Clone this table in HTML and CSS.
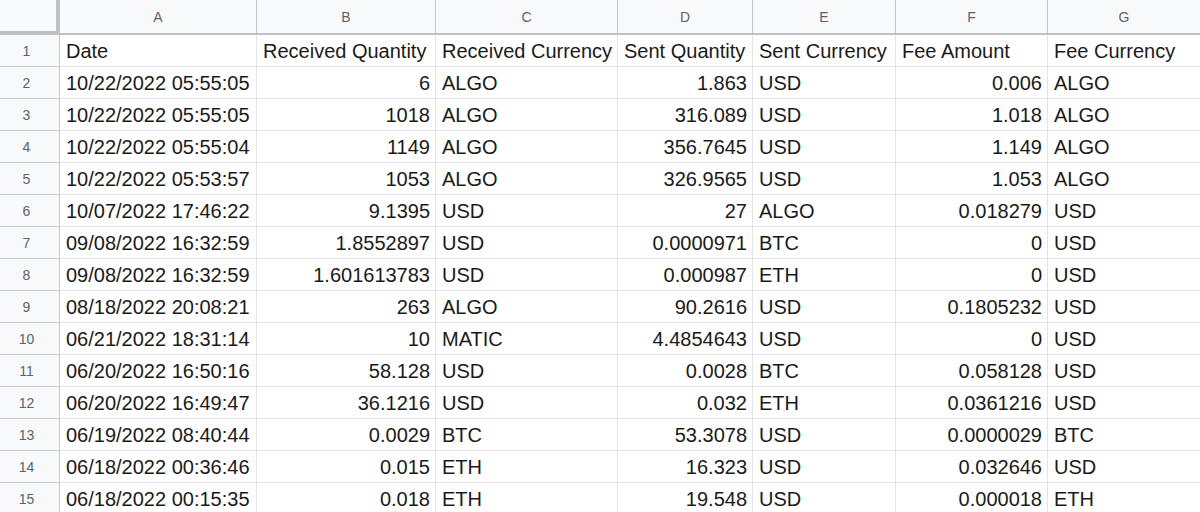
FILE: index.html
```html
<!DOCTYPE html>
<html>
<head>
<meta charset="utf-8">
<link rel="stylesheet" href="styles.css">
</head>
<body>
<div class="sheet">
  <div class="corner"></div>
  <div class="colh">A</div><div class="colh">B</div><div class="colh">C</div><div class="colh">D</div><div class="colh">E</div><div class="colh">F</div><div class="colh last">G</div>

  <div class="rowh">1</div>
  <div class="c">Date</div><div class="c">Received Quantity</div><div class="c">Received Currency</div><div class="c">Sent Quantity</div><div class="c">Sent Currency</div><div class="c">Fee Amount</div><div class="c last">Fee Currency</div>

  <div class="rowh">2</div>
  <div class="c">10/22/2022 05:55:05</div><div class="c n">6</div><div class="c">ALGO</div><div class="c n">1.863</div><div class="c">USD</div><div class="c n">0.006</div><div class="c last">ALGO</div>

  <div class="rowh">3</div>
  <div class="c">10/22/2022 05:55:05</div><div class="c n">1018</div><div class="c">ALGO</div><div class="c n">316.089</div><div class="c">USD</div><div class="c n">1.018</div><div class="c last">ALGO</div>

  <div class="rowh">4</div>
  <div class="c">10/22/2022 05:55:04</div><div class="c n">1149</div><div class="c">ALGO</div><div class="c n">356.7645</div><div class="c">USD</div><div class="c n">1.149</div><div class="c last">ALGO</div>

  <div class="rowh">5</div>
  <div class="c">10/22/2022 05:53:57</div><div class="c n">1053</div><div class="c">ALGO</div><div class="c n">326.9565</div><div class="c">USD</div><div class="c n">1.053</div><div class="c last">ALGO</div>

  <div class="rowh">6</div>
  <div class="c">10/07/2022 17:46:22</div><div class="c n">9.1395</div><div class="c">USD</div><div class="c n">27</div><div class="c">ALGO</div><div class="c n">0.018279</div><div class="c last">USD</div>

  <div class="rowh">7</div>
  <div class="c">09/08/2022 16:32:59</div><div class="c n">1.8552897</div><div class="c">USD</div><div class="c n">0.0000971</div><div class="c">BTC</div><div class="c n">0</div><div class="c last">USD</div>

  <div class="rowh">8</div>
  <div class="c">09/08/2022 16:32:59</div><div class="c n">1.601613783</div><div class="c">USD</div><div class="c n">0.000987</div><div class="c">ETH</div><div class="c n">0</div><div class="c last">USD</div>

  <div class="rowh">9</div>
  <div class="c">08/18/2022 20:08:21</div><div class="c n">263</div><div class="c">ALGO</div><div class="c n">90.2616</div><div class="c">USD</div><div class="c n">0.1805232</div><div class="c last">USD</div>

  <div class="rowh">10</div>
  <div class="c">06/21/2022 18:31:14</div><div class="c n">10</div><div class="c">MATIC</div><div class="c n">4.4854643</div><div class="c">USD</div><div class="c n">0</div><div class="c last">USD</div>

  <div class="rowh">11</div>
  <div class="c">06/20/2022 16:50:16</div><div class="c n">58.128</div><div class="c">USD</div><div class="c n">0.0028</div><div class="c">BTC</div><div class="c n">0.058128</div><div class="c last">USD</div>

  <div class="rowh">12</div>
  <div class="c">06/20/2022 16:49:47</div><div class="c n">36.1216</div><div class="c">USD</div><div class="c n">0.032</div><div class="c">ETH</div><div class="c n">0.0361216</div><div class="c last">USD</div>

  <div class="rowh">13</div>
  <div class="c">06/19/2022 08:40:44</div><div class="c n">0.0029</div><div class="c">BTC</div><div class="c n">53.3078</div><div class="c">USD</div><div class="c n">0.0000029</div><div class="c last">BTC</div>

  <div class="rowh">14</div>
  <div class="c">06/18/2022 00:36:46</div><div class="c n">0.015</div><div class="c">ETH</div><div class="c n">16.323</div><div class="c">USD</div><div class="c n">0.032646</div><div class="c last">USD</div>

  <div class="rowh">15</div>
  <div class="c">06/18/2022 00:15:35</div><div class="c n">0.018</div><div class="c">ETH</div><div class="c n">19.548</div><div class="c">USD</div><div class="c n">0.000018</div><div class="c last">ETH</div>
</div>
</body>
</html>
```

FILE: styles.css
```css
html, body {
  margin: 0;
  padding: 0;
  background: #ffffff;
  overflow: hidden;
}

.sheet {
  display: grid;
  grid-template-columns: 60px 197px 179px 182px 135px 143px 152px 1fr;
  grid-template-rows: 35px;
  grid-auto-rows: 32px;
  width: 1200px;
  font-family: "Liberation Sans", Arial, sans-serif;
}

.corner {
  background: #f8f9fa;
  border-right: 4px solid #c0c0c0;
  border-bottom: 4px solid #c0c0c0;
  box-sizing: border-box;
}

.colh {
  background: #f8f9fa;
  color: #5f6368;
  font-size: 14px;
  display: flex;
  align-items: center;
  justify-content: center;
  border-right: 1px solid #c7c7c7;
  border-bottom: 2px solid #c0c0c0;
  box-sizing: border-box;
}

.rowh {
  background: #f8f9fa;
  color: #5f6368;
  font-size: 14px;
  display: flex;
  align-items: center;
  justify-content: center;
  border-right: 1px solid #c7c7c7;
  border-bottom: 1px solid #c7c7c7;
  box-sizing: border-box;
  padding-right: 6px;
}

.c {
  font-size: 20px;
  color: #1a1a1a;
  display: flex;
  align-items: center;
  padding: 2px 5px 0 6px;
  border-right: 1px solid #e2e3e3;
  border-bottom: 1px solid #e2e3e3;
  box-sizing: border-box;
  white-space: nowrap;
  overflow: hidden;
}

.c.n {
  justify-content: flex-end;
}

.last {
  border-right: none;
}
```
